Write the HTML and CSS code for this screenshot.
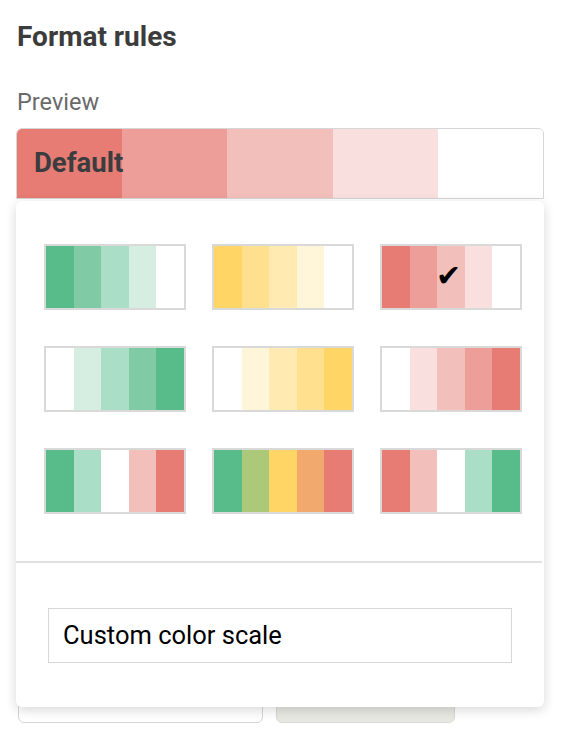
FILE: index.html
```html
<!DOCTYPE html>
<html lang="en">
<head>
    <meta charset="UTF-8">
    <meta name="viewport" content="width=device-width, initial-scale=1.0">
    <title>Format rules</title>
    <link rel="stylesheet" href="styles.css">
</head>
<body>

    <div class="page">
        <!-- Heading -->
        <h1 class="title">Format rules</h1>
        <div class="label">Preview</div>

        <!-- Preview of the selected scale -->
        <div class="preview">
            <div class="seg red1"></div>
            <div class="seg red2"></div>
            <div class="seg red3"></div>
            <div class="seg red4"></div>
            <div class="seg white"></div>
            <span class="preview-text">Default</span>
        </div>

        <!-- Scale picker dropdown -->
        <div class="menu-anchor">
            <div class="menu">
                <div class="swatches">
                    <div class="swatch">
                        <div class="seg g1"></div><div class="seg g2"></div><div class="seg g3"></div><div class="seg g4"></div><div class="seg white"></div>
                    </div>
                    <div class="swatch">
                        <div class="seg y1"></div><div class="seg y2"></div><div class="seg y3"></div><div class="seg y4"></div><div class="seg white"></div>
                    </div>
                    <div class="swatch selected">
                        <div class="seg red1"></div><div class="seg red2"></div><div class="seg red3"></div><div class="seg red4"></div><div class="seg white"></div>
                        <span class="check">✔</span>
                    </div>

                    <div class="swatch">
                        <div class="seg white"></div><div class="seg g4"></div><div class="seg g3"></div><div class="seg g2"></div><div class="seg g1"></div>
                    </div>
                    <div class="swatch">
                        <div class="seg white"></div><div class="seg y4"></div><div class="seg y3"></div><div class="seg y2"></div><div class="seg y1"></div>
                    </div>
                    <div class="swatch">
                        <div class="seg white"></div><div class="seg red4"></div><div class="seg red3"></div><div class="seg red2"></div><div class="seg red1"></div>
                    </div>

                    <div class="swatch">
                        <div class="seg g1"></div><div class="seg g3"></div><div class="seg white"></div><div class="seg red3"></div><div class="seg red1"></div>
                    </div>
                    <div class="swatch">
                        <div class="seg g1"></div><div class="seg lime"></div><div class="seg y1"></div><div class="seg orange"></div><div class="seg red1"></div>
                    </div>
                    <div class="swatch">
                        <div class="seg red1"></div><div class="seg red3"></div><div class="seg white"></div><div class="seg g3"></div><div class="seg g1"></div>
                    </div>
                </div>

                <div class="divider"></div>

                <div class="custom">
                    <div class="custom-box">Custom color scale</div>
                </div>
            </div>
        </div>

        <!-- Buttons partly hidden by the dropdown -->
        <div class="actions">
            <div class="btn btn-cancel"></div>
            <div class="btn btn-done"></div>
        </div>
    </div>

</body>
</html>
```

FILE: styles.css
```css
* {
    margin: 0;
    padding: 0;
    box-sizing: border-box;
}

body {
    font-family: Roboto, "Liberation Sans", sans-serif;
    background: #fff;
}

.page {
    padding: 21px 0 0 16px;
    width: 560px;
}

.title {
    font-size: 28px;
    line-height: 32px;
    font-weight: 700;
    color: #3c3c3c;
    padding-left: 1px;
}

.label {
    margin-top: 35px;
    font-size: 23.5px;
    line-height: 28px;
    color: #6a6a6a;
    padding-left: 1px;
}

.preview {
    position: relative;
    display: flex;
    margin-top: 12px;
    width: 528px;
    height: 71px;
    border: 1.5px solid #d6d6d6;
    border-radius: 6px 6px 0 0;
    overflow: hidden;
}

.preview-text {
    position: absolute;
    left: 17px;
    top: 0;
    line-height: 68px;
    font-size: 27.5px;
    font-weight: 700;
    color: #3a3c40;
}

.seg {
    flex: 1;
}

/* colors */
.white { background: #fff; }
.red1 { background: #e67c73; }
.red2 { background: #ed9e98; }
.red3 { background: #f3bfbb; }
.red4 { background: #f9dfdd; }
.g1 { background: #57bb8a; }
.g2 { background: #80cba6; }
.g3 { background: #abdec6; }
.g4 { background: #d6eee2; }
.y1 { background: #ffd666; }
.y2 { background: #fee08e; }
.y3 { background: #ffeab2; }
.y4 { background: #fff5d9; }
.lime { background: #abc978; }
.orange { background: #f2a96d; }

.menu-anchor {
    position: relative;
}

.menu {
    position: absolute;
    top: 2px;
    left: 0;
    width: 528px;
    background: #fff;
    border-radius: 6px;
    box-shadow: 0 3px 12px rgba(0, 0, 0, 0.16);
    z-index: 5;
}

.swatches {
    display: grid;
    grid-template-columns: repeat(3, 142px);
    column-gap: 26px;
    row-gap: 36px;
    padding: 43px 22px 0 28px;
}

.swatch {
    position: relative;
    display: flex;
    height: 66px;
    border: 2px solid #d9d9d9;
}

.check {
    position: absolute;
    left: 54px;
    top: 15px;
    font-family: "DejaVu Sans", sans-serif;
    font-size: 30px;
    line-height: 30px;
    color: #000;
}

.divider {
    margin-top: 47px;
    margin-right: 2px;
    height: 2px;
    background: #e0e0e0;
}

.custom {
    padding: 45px 32px 44px 32px;
}

.custom-box {
    height: 55px;
    border: 1.5px solid #d8d8d8;
    padding-left: 14px;
    line-height: 52px;
    font-size: 25.5px;
    color: #000;
}

.actions {
    display: flex;
    gap: 13px;
    margin-top: 482px;
    padding-left: 2px;
}

.btn {
    height: 42px;
    border-radius: 6px;
}

.btn-cancel {
    width: 245px;
    border: 1.5px solid #d6d6d6;
    background: #fff;
}

.btn-done {
    width: 179px;
    border: 1.5px solid #d8d8d8;
    background: #e8e8e3;
}
```
